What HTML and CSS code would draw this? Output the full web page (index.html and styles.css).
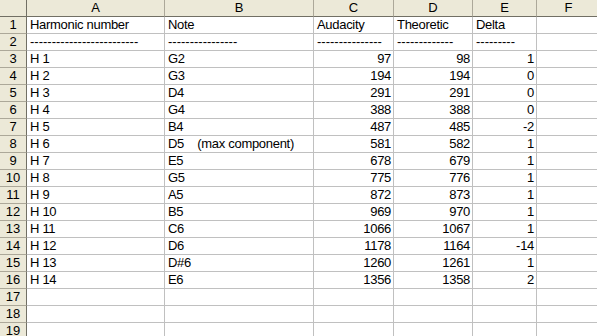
FILE: index.html
```html
<!DOCTYPE html>
<html lang="en">
<head>
    <meta charset="UTF-8">
    <title>Harmonics</title>
    <link rel="stylesheet" href="styles.css">
</head>
<body>
    <table class="sheet">
        <colgroup>
            <col class="c-head">
            <col class="c-a">
            <col class="c-b">
            <col class="c-c">
            <col class="c-d">
            <col class="c-e">
            <col class="c-f">
        </colgroup>
        <thead>
            <tr>
                <th class="corner"></th>
                <th>A</th><th>B</th><th>C</th><th>D</th><th>E</th><th>F</th>
            </tr>
        </thead>
        <tbody id="rows">
            <tr><th>1</th><td>Harmonic number</td><td>Note</td><td>Audacity</td><td>Theoretic</td><td>Delta</td><td></td></tr>
            <tr class="rule"><th>2</th><td>-------------------------</td><td>----------------</td><td>---------------</td><td>-------------</td><td>---------</td><td></td></tr>
            <tr><th>3</th><td>H 1</td><td>G2</td><td class="num">97</td><td class="num">98</td><td class="num">1</td><td></td></tr>
            <tr><th>4</th><td>H 2</td><td>G3</td><td class="num">194</td><td class="num">194</td><td class="num">0</td><td></td></tr>
            <tr><th>5</th><td>H 3</td><td>D4</td><td class="num">291</td><td class="num">291</td><td class="num">0</td><td></td></tr>
            <tr><th>6</th><td>H 4</td><td>G4</td><td class="num">388</td><td class="num">388</td><td class="num">0</td><td></td></tr>
            <tr><th>7</th><td>H 5</td><td>B4</td><td class="num">487</td><td class="num">485</td><td class="num">-2</td><td></td></tr>
            <tr><th>8</th><td>H 6</td><td class="pre">D5    (max component)</td><td class="num">581</td><td class="num">582</td><td class="num">1</td><td></td></tr>
            <tr><th>9</th><td>H 7</td><td>E5</td><td class="num">678</td><td class="num">679</td><td class="num">1</td><td></td></tr>
            <tr><th>10</th><td>H 8</td><td>G5</td><td class="num">775</td><td class="num">776</td><td class="num">1</td><td></td></tr>
            <tr><th>11</th><td>H 9</td><td>A5</td><td class="num">872</td><td class="num">873</td><td class="num">1</td><td></td></tr>
            <tr><th>12</th><td>H 10</td><td>B5</td><td class="num">969</td><td class="num">970</td><td class="num">1</td><td></td></tr>
            <tr><th>13</th><td>H 11</td><td>C6</td><td class="num">1066</td><td class="num">1067</td><td class="num">1</td><td></td></tr>
            <tr><th>14</th><td>H 12</td><td>D6</td><td class="num">1178</td><td class="num">1164</td><td class="num">-14</td><td></td></tr>
            <tr><th>15</th><td>H 13</td><td>D#6</td><td class="num">1260</td><td class="num">1261</td><td class="num">1</td><td></td></tr>
            <tr><th>16</th><td>H 14</td><td>E6</td><td class="num">1356</td><td class="num">1358</td><td class="num">2</td><td></td></tr>
            <tr><th>17</th><td></td><td></td><td></td><td></td><td></td><td></td></tr>
            <tr><th>18</th><td></td><td></td><td></td><td></td><td></td><td></td></tr>
            <tr><th>19</th><td></td><td></td><td></td><td></td><td></td><td></td></tr>
        </tbody>
    </table>
</body>
</html>
```

FILE: styles.css
```css
html, body {
    margin: 0;
    background: #ffffff;
    overflow: hidden;
}

.sheet {
    border-collapse: separate;
    border-spacing: 0;
    table-layout: fixed;
    width: 601px;
    font-family: "Liberation Sans", Arial, sans-serif;
    font-size: 13px;
    color: #000;
}

.c-head { width: 27px; }
.c-a { width: 138px; }
.c-b { width: 149px; }
.c-c { width: 80px; }
.c-d { width: 79px; }
.c-e { width: 64px; }
.c-f { width: 64px; }

.sheet td,
.sheet th {
    height: 16px;
    padding: 0 2px 0 3px;
    line-height: 16px;
    border-right: 1px solid #c0c0c0;
    border-bottom: 1px solid #c0c0c0;
    white-space: nowrap;
    overflow: hidden;
    text-align: left;
    font-weight: normal;
    letter-spacing: -0.3px;
    box-sizing: content-box;
}

/* dashed underline row keeps full-width hyphens */
.sheet .rule td {
    letter-spacing: 0;
}

/* column and row headers */
.sheet thead th {
    background: #ece9d8;
    text-align: center;
    border-right: 1px solid #aca899;
    border-bottom: 1px solid #716f64;
    padding: 0;
    letter-spacing: 0;
}

.sheet tbody th {
    background: #ece9d8;
    text-align: center;
    padding: 0;
    letter-spacing: 0;
    border-right: 1px solid #716f64;
    border-bottom: 1px solid #aca899;
}

.sheet thead th.corner {
    border-right: 1px solid #716f64;
}

.num {
    text-align: right !important;
}

.pre {
    white-space: pre !important;
}
```
